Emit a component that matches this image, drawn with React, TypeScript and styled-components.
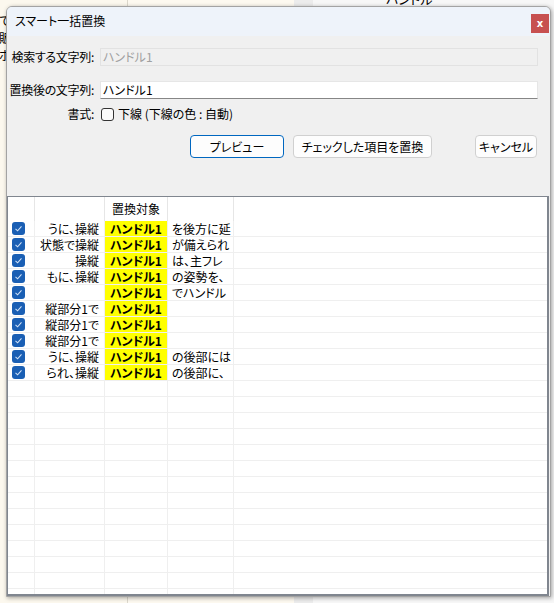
import styled, { createGlobalStyle } from 'styled-components';

const GlobalStyle = createGlobalStyle`
  html, body {
    margin: 0;
    padding: 0;
  }
  body {
    width: 554px;
    height: 603px;
    overflow: hidden;
    font-family: "Noto Sans CJK JP", "Noto Sans", sans-serif;
    font-size: 12px;
    color: #000;
  }
`;

const Desktop = styled.div`
  position: relative;
  width: 554px;
  height: 603px;
  display: flex;
  overflow: hidden;
  background: #fdf9f0;
`;

const Pane = styled.div<{ $w?: number; $bg: string; $line?: string }>`
  width: ${(p) => (p.$w ? `${p.$w}px` : 'auto')};
  flex: ${(p) => (p.$w ? 'none' : '1')};
  background: ${(p) => p.$bg};
  border-right: 1px solid ${(p) => p.$line || 'transparent'};
  display: flex;
  flex-direction: column;
  overflow: hidden;
`;

const BackText = styled.div`
  line-height: 17px;
  font-size: 12px;
  margin-top: 12px;
  margin-left: -1px;
  white-space: nowrap;
`;

const BackCell = styled.div`
  margin-top: -9px;
  margin-left: 73px;
  font-size: 13px;
  line-height: 16px;
  font-feature-settings: "palt";
`;

const Window = styled.div`
  position: absolute;
  left: 6px;
  top: 6px;
  width: 545px;
  height: 591px;
  box-sizing: border-box;
  border: 1px solid #a3a3a3;
  border-radius: 6px 6px 0 0;
  background: #f0f0f0;
  box-shadow: 1px 1px 4px rgba(0, 0, 0, 0.35);
  display: flex;
  flex-direction: column;
  overflow: hidden;
`;

const TitleBar = styled.div`
  height: 29px;
  flex: none;
  background: #eef3fa;
  display: flex;
  align-items: flex-start;
  padding-left: 8px;
  padding-right: 1px;
`;

const Title = styled.div`
  margin-top: 6px;
  font-size: 12px;
  line-height: 16px;
  font-feature-settings: "palt";
  flex: 1;
`;

const CloseBtn = styled.button`
  margin-top: 7px;
  width: 18px;
  height: 19px;
  border: none;
  padding: 0;
  background: #c75050;
  color: #fff;
  font-family: "DejaVu Sans", sans-serif;
  font-weight: bold;
  font-size: 10px;
  line-height: 17px;
`;

const Form = styled.div`
  display: grid;
  grid-template-columns: 87px 1fr;
  column-gap: 6px;
  padding: 12px 12px 0 0;
  align-items: center;
`;

const Label = styled.div<{ $top?: number }>`
  text-align: right;
  line-height: 18px;
  margin-top: ${(p) => p.$top || 0}px;
  font-feature-settings: "palt";
  letter-spacing: -0.3px;
  white-space: nowrap;
`;

const TextBox = styled.div<{ $disabled?: boolean; $top?: number }>`
  height: 18px;
  box-sizing: border-box;
  margin-top: ${(p) => p.$top || 0}px;
  background: ${(p) => (p.$disabled ? '#f0f0f0' : '#fff')};
  border: 1px solid ${(p) => (p.$disabled ? '#e2e2e2' : '#e6e6e6')};
  border-bottom-color: ${(p) => (p.$disabled ? '#e2e2e2' : '#868686')};
  color: ${(p) => (p.$disabled ? '#a0a0a0' : '#000')};
  padding-left: 2px;
  line-height: 16px;
  font-feature-settings: "palt";
`;

const CheckRow = styled.div`
  display: flex;
  align-items: center;
  gap: 4px;
  margin-top: 6px;
  line-height: 16px;
  font-feature-settings: "palt";
`;

const BoxOutline = styled.span`
  width: 13px;
  height: 13px;
  box-sizing: border-box;
  border: 1px solid #333;
  border-radius: 3px;
  background: #fbfbfb;
  margin-left: 1px;
`;

const ButtonRow = styled.div`
  display: flex;
  justify-content: flex-end;
  padding: 12px 13px 0 0;
`;

const Button = styled.button<{ $w: number; $primary?: boolean; $gap?: number }>`
  width: ${(p) => p.$w}px;
  height: 23px;
  margin-left: ${(p) => p.$gap || 0}px;
  box-sizing: border-box;
  background: #fdfdfd;
  border: 1px solid ${(p) => (p.$primary ? '#0067c0' : '#d0d0d0')};
  border-radius: 4px;
  font-family: inherit;
  font-size: 12px;
  font-feature-settings: "palt";
  color: #000;
  padding: 0;
`;

const Grid = styled.div`
  margin-top: 38px;
  margin-right: 1px;
  flex: 1;
  background: #fff;
  border: 1px solid #80868f;
  border-right-width: 2px;
  border-bottom-width: 2px;
  overflow: hidden;
`;

const GridRow = styled.div<{ $h: number }>`
  display: grid;
  grid-template-columns: 27px 70px 63px 66px 1fr;
  height: ${(p) => p.$h}px;
`;

const HeadCell = styled.div`
  border-right: 1px solid #e6e6e6;
  text-align: center;
  line-height: 24px;
  font-feature-settings: "palt";
  &:last-child {
    border-right: none;
  }
`;

const Cell = styled.div<{ $align?: string; $mark?: boolean }>`
  border-right: 1px solid #efefef;
  border-bottom: 1px solid #efefef;
  background: ${(p) => (p.$mark ? '#ffff00' : '#fff')};
  background-clip: padding-box;
  text-align: ${(p) => p.$align || 'left'};
  font-weight: ${(p) => (p.$mark ? 'bold' : 'normal')};
  padding: 0 ${(p) => (p.$align === 'right' ? '5px' : '4px')};
  line-height: 15px;
  white-space: nowrap;
  overflow: hidden;
  font-feature-settings: "palt";
  &:last-child {
    border-right: none;
  }
`;

const CheckCell = styled.div`
  border-right: 1px solid #efefef;
  border-bottom: 1px solid #efefef;
  padding-left: 4px;
  display: flex;
  align-items: center;
`;

const Tick = styled.span`
  width: 13px;
  height: 13px;
  border-radius: 3px;
  background: #1a5fb4;
  display: flex;
  align-items: center;
  justify-content: center;
`;

const rows: [string, string][] = [
  ['うに、操縦', 'を後方に延'],
  ['状態で操縦', 'が備えられ'],
  ['操縦', 'は、主フレ'],
  ['もに、操縦', 'の姿勢を、'],
  ['', 'でハンドル'],
  ['縦部分1で', ''],
  ['縦部分1で', ''],
  ['縦部分1で', ''],
  ['うに、操縦', 'の後部には'],
  ['られ、操縦', 'の後部に、'],
];

const emptyRows = Array.from({ length: 14 }, (_v, i) => i);

export default function App() {
  return (
    <>
      <GlobalStyle />
      <Desktop>
        <Pane $w={127} $bg="#fcf8ee" $line="#dcd8cc">
          <BackText>
            て<br />販<br />ボ
          </BackText>
        </Pane>
        <Pane $w={165} $bg="#fdf9f0" />
        <Pane $w={18} $bg="#ececec" />
        <Pane $bg="#f7f7f7">
          <BackCell>ハンドル</BackCell>
        </Pane>

        <Window>
          <TitleBar>
            <Title>スマート一括置換</Title>
            <CloseBtn>x</CloseBtn>
          </TitleBar>

          <Form>
            <Label>検索する文字列:</Label>
            <TextBox $disabled>ハンドル1</TextBox>
            <Label $top={15}>置換後の文字列:</Label>
            <TextBox $top={15}>ハンドル1</TextBox>
            <Label $top={6}>書式:</Label>
            <CheckRow>
              <BoxOutline />
              下線 (下線の色 : 自動)
            </CheckRow>
          </Form>

          <ButtonRow>
            <Button $w={94} $primary>プレビュー</Button>
            <Button $w={139} $gap={9}>チェックした項目を置換</Button>
            <Button $w={62} $gap={43}>キャンセル</Button>
          </ButtonRow>

          <Grid>
            <GridRow $h={24}>
              <HeadCell />
              <HeadCell />
              <HeadCell>置換対象</HeadCell>
              <HeadCell />
              <HeadCell />
            </GridRow>
            {rows.map(([before, after], i) => (
              <GridRow $h={16} key={`row-${i}`}>
                <CheckCell>
                  <Tick>
                    <svg width="9" height="9" viewBox="0 0 9 9">
                      <polyline points="1.5,4.8 3.6,6.8 7.5,2.4" fill="none" stroke="#cfe0f5" strokeWidth="1.1" />
                    </svg>
                  </Tick>
                </CheckCell>
                <Cell $align="right">{before}</Cell>
                <Cell $align="center" $mark>ハンドル1</Cell>
                <Cell>{after}</Cell>
                <Cell />
              </GridRow>
            ))}
            {emptyRows.map((i) => (
              <GridRow $h={16} key={`empty-${i}`}>
                <CheckCell />
                <Cell />
                <Cell />
                <Cell />
                <Cell />
              </GridRow>
            ))}
          </Grid>
        </Window>
      </Desktop>
    </>
  );
}
